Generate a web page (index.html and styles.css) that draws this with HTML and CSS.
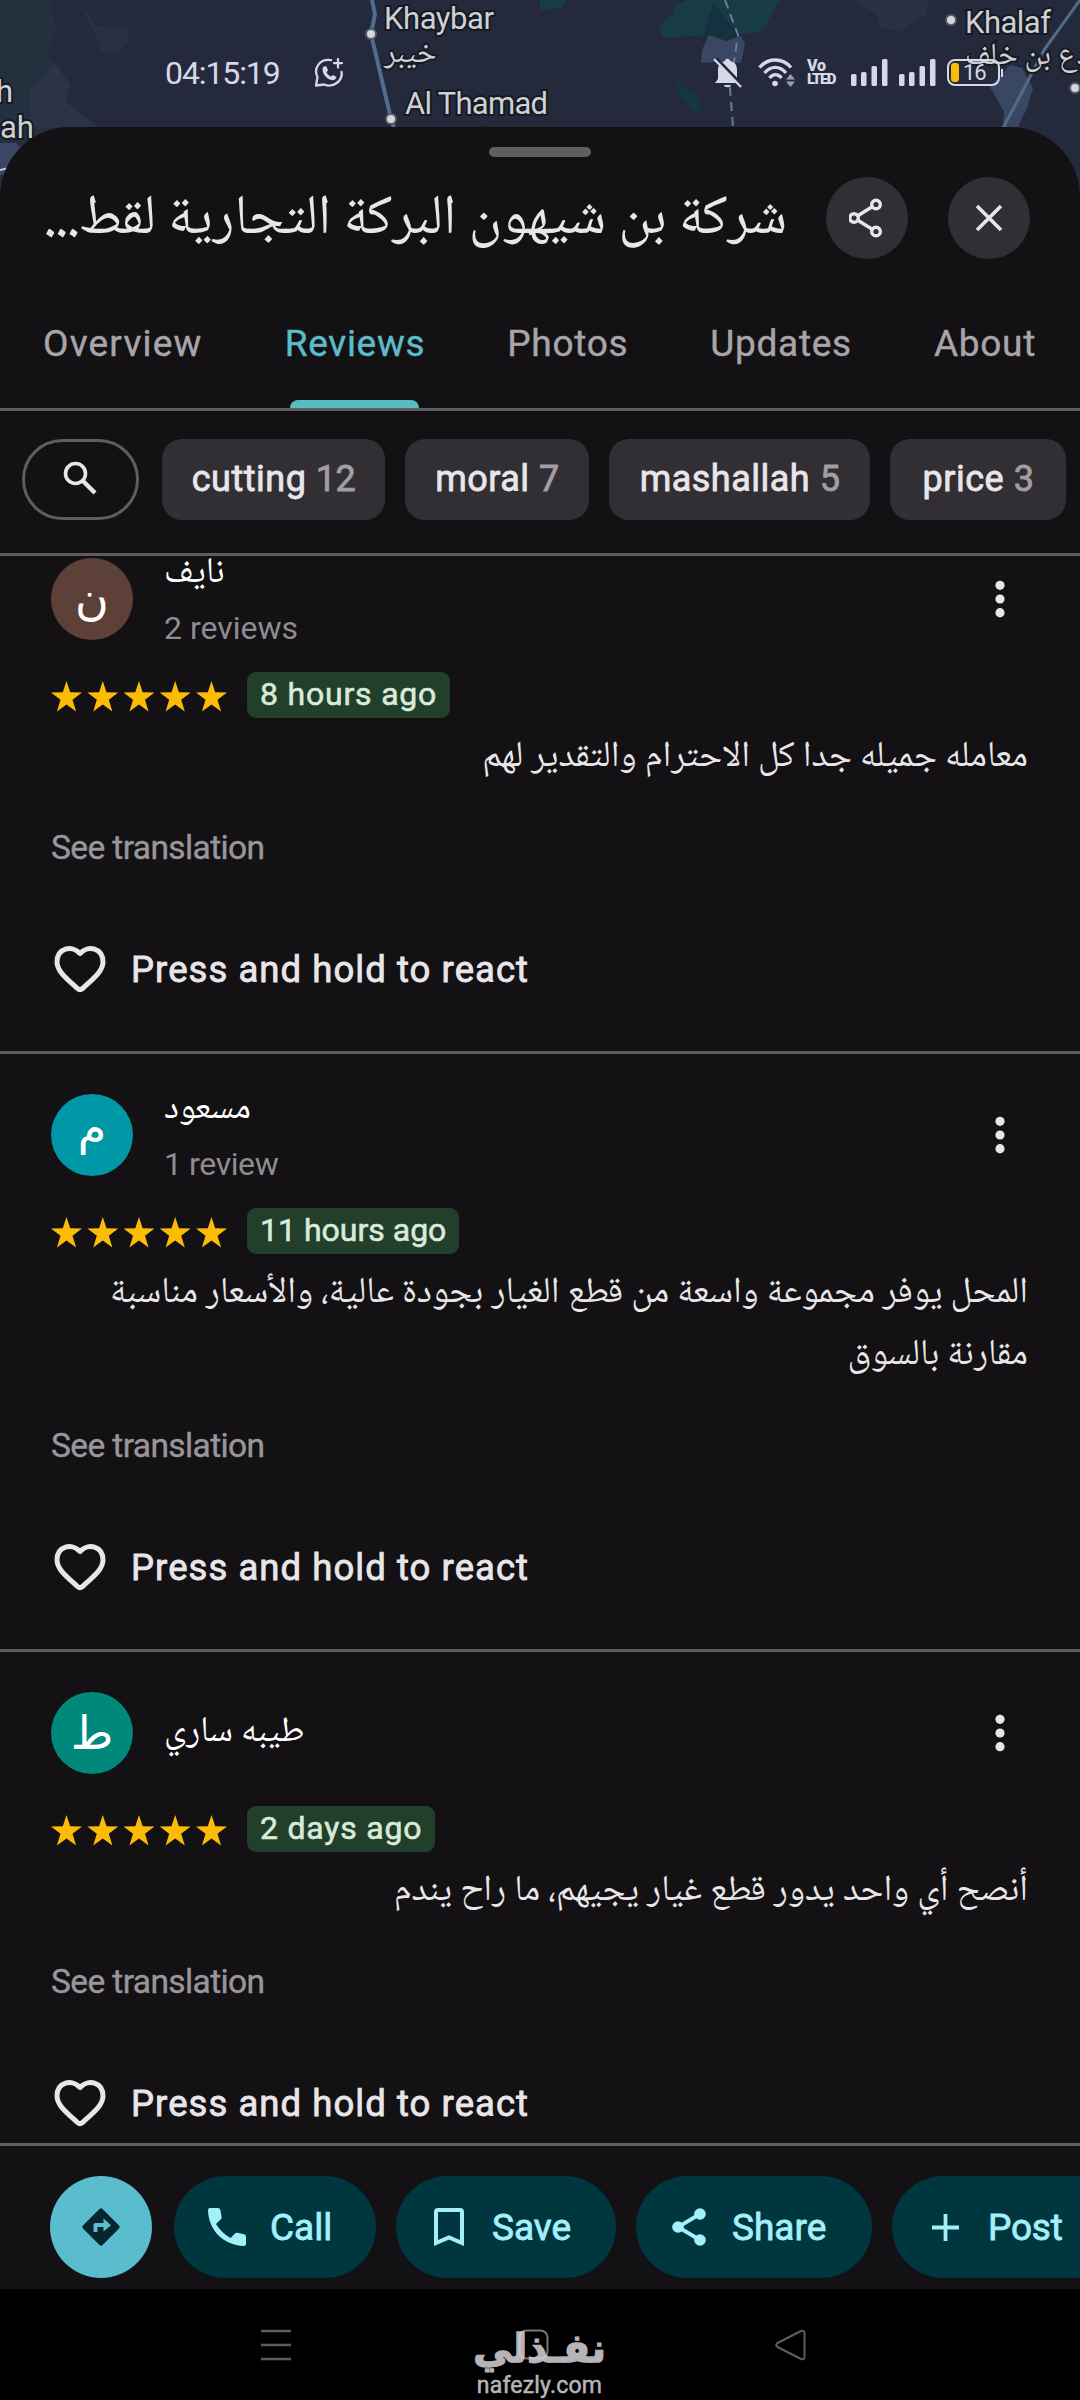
FILE: index.html
```
<!DOCTYPE html>
<html lang="en">
<head>
<meta charset="utf-8">
<title>Reviews</title>
<link rel="stylesheet" href="styles.css">
</head>
<body>
<svg width="0" height="0" class="defs">
  <defs>
    <symbol id="star" viewBox="0 0 31 31"><path fill="#fcbc05" d="M15.500 0 L19.200 11.200 L31 11.400 L21.500 18.700 L25.100 30.500 L15.500 23.500 L5.900 30.500 L9.500 18.700 L0 11.400 L11.800 11.200 Z"/></symbol>
    <symbol id="heart" viewBox="0 0 52 48"><path fill="none" stroke="#e9e6ea" stroke-width="5" stroke-linejoin="round" d="M26 8.500 C18 -.5 3 3 3 17 C3 26 12 33 23.500 43.500 Q26 45.700 28.500 43.500 C40 33 49 26 49 17 C49 3 34 -.5 26 8.500 Z"/></symbol>
    <symbol id="more" viewBox="0 0 10 38"><g fill="#e9e6ea"><circle cx="5" cy="5.300" r="4.600"/><circle cx="5" cy="19" r="4.600"/><circle cx="5" cy="32.700" r="4.600"/></g></symbol>
    <symbol id="stars" viewBox="0 0 176 31">
      <use href="#star" x="0" width="31" height="31"/><use href="#star" x="36.300" width="31" height="31"/><use href="#star" x="72.500" width="31" height="31"/><use href="#star" x="108.700" width="31" height="31"/><use href="#star" x="145" width="31" height="31"/>
    </symbol>
  </defs>
</svg>
<div class="screen">
  <svg class="map" width="1080" height="210" viewBox="0 0 1080 210">
    <rect width="1080" height="210" fill="#242a3c"/>
    <path fill="#27333f" opacity=".7" d="M0 0H50L56 30L48 55L62 80L55 105L95 127V210H0Z"/>
    <path fill="#283144" d="M78 0L96 26L130 28L128 42L118 54L102 52L96 36Z"/>
    <path fill="#2b3346" d="M55 62L70 85L66 102L98 127H30V90Z"/>
    <path fill="#2a3142" d="M855 0H930L925 15L900 32L880 26L876 14Z"/>
    <path fill="#3b4667" d="M0 143H16L30 160L12 175H0Z"/>
    <path stroke="#c4c6c8" stroke-width="2" d="M0 170L14 167"/>
    <path fill="#173c46" d="M540 0H566L562 8L540 10Z M659 30L665 18L674 14V6L687 0H781L770 17L764 30L757 32L736 35L725 38L690 36L664 38Z"/>
    <path fill="#15303e" d="M714 4L739 33L734 38L727 41L703 35L709 15Z"/>
    <path fill="#3a4763" d="M709 35L726 41L741 36L745 44L741 63L717 62L701 63L702 50Z"/>
    <path fill="#143841" d="M676 81L697 95L701 110L694 112L680 96Z"/>
    <path fill="#3a4763" d="M990 87L1010 65L1022 68L1033 88L1027 108L1018 127H1003L1004 112Z"/>
    <path fill="none" stroke="#697e92" stroke-width="2" stroke-dasharray="9 6" d="M725 0L738 35L730 88L733 127"/>
    <path fill="none" stroke="#4f6c91" stroke-width="4" d="M372 0L375 14L371 34L391 119L394 128"/>
    <path fill="none" stroke="#516b88" stroke-width="3" d="M1080 0L1044 50L1019 98L1003 128"/>
    <g fill="#d5d6d8" stroke="#555a63" stroke-width="2"><circle cx="371" cy="34" r="5"/><circle cx="391" cy="119" r="5"/><circle cx="951" cy="20" r="5"/><circle cx="1075" cy="88" r="5"/></g>
    <g class="place">
      <text x="384" y="29" textLength="110">Khaybar</text>
      <text x="384" y="62" class="place-ar">خيبر</text>
      <text x="405" y="114" textLength="143">Al Thamad</text>
      <text x="441" y="150" class="place-ar">الثمد</text>
      <text x="965" y="33" textLength="86">Khalaf</text>
      <text x="965" y="64" class="place-ar">جدع بن خلف</text>
      <text x="-4" y="102">h</text>
      <text x="0" y="138">ah</text>
    </g>
  </svg>

  <header class="status">
    <span class="clock">04:15:19</span>
    <svg class="wa" width="30" height="30" viewBox="0 0 30 30"><path fill="none" stroke="#d6d8e8" stroke-width="2.300" stroke-linecap="round" stroke-linejoin="round" d="M17 2.200 C6 .5 -1 10 3.500 19 L2 27.500 L10 26.500 C20 30.500 29 22 27.500 14 M24 1V9.500 M20 5.200H28"/><path fill="#d6d8e8" d="M9 9L12 8L14 12L12.500 14.500C14 17 15.500 18 17 18.500L19 17L22.500 19C22 21.500 20 22.500 17.500 22C12.500 21 7 15 9 9Z"/></svg>
    <div class="indicators">
      <svg width="30" height="30" viewBox="0 0 30 30"><path fill="#d6d8e8" d="M2 25L5 21V12C5 7 8 4 12 3C12 0 17 0 17 3C22 4 24 7 24 12V21L27 25Z M11 27H18C18 30 11 30 11 27Z"/><path stroke="#242a3c" stroke-width="3" d="M3 0L30 28"/><path stroke="#d6d8e8" stroke-width="2.300" d="M1 1L28 29"/></svg>
      <svg class="wifi" width="40" height="30" viewBox="0 0 40 30"><g fill="none" stroke="#d6d8e8" stroke-width="3.400"><path d="M1.500 9.500C10-.5 24.500-.5 33 9.500"/><path d="M6.500 15C13 7.500 21.500 7.500 28 15"/><path d="M11.500 20C15 15.500 20 15.500 23.500 20"/></g><circle cx="17" cy="25.500" r="2.800" fill="#d6d8e8"/><path fill="#9a9fb0" d="M28 21.500L32.500 16L37 21.500ZM28 23.500H37L32.500 29Z"/></svg>
      <div class="volte"><span>Vo</span><span>LTED</span></div>
      <svg class="signal" width="37" height="27" viewBox="0 0 37 27"><g fill="#d6d8e8"><rect y="15" width="5.500" height="12" rx="1.500"/><rect x="10" y="13" width="5.500" height="14" rx="1.500"/><rect x="20.500" y="7" width="5.500" height="20" rx="1.500"/><rect x="31" width="5.500" height="27" rx="1.500"/></g></svg>
      <svg class="signal" width="37" height="27" viewBox="0 0 37 27"><g fill="#d6d8e8"><rect y="15" width="5.500" height="12" rx="1.500"/><rect x="10" y="13" width="5.500" height="14" rx="1.500"/><rect x="20.500" y="7" width="5.500" height="20" rx="1.500"/><rect x="31" width="5.500" height="27" rx="1.500"/></g></svg>
      <div class="battery"><i></i><span>16</span></div>
    </div>
  </header>

  <main class="sheet">
    <div class="handle"></div>
    <div class="titlebar">
      <h1 dir="rtl">شركة بن شيهون البركة التجارية لقط<span class="dots">...</span></h1>
      <button class="round"><svg width="36" height="40" viewBox="0 0 36 40"><g fill="none" stroke="#e9e6ea" stroke-width="3.400"><circle cx="27" cy="6.500" r="4.300"/><circle cx="5" cy="20" r="4.300"/><circle cx="27" cy="33.500" r="4.300"/><path d="M8.800 17.700L23.200 8.800M8.800 22.300L23.200 31.200"/></g></svg></button>
      <button class="round"><svg width="28" height="28" viewBox="0 0 28 28"><path stroke="#e9e6ea" stroke-width="3.600" d="M2 2L26 26M26 2L2 26"/></svg></button>
    </div>
    <nav class="tabs"><a>Overview</a><a class="active">Reviews</a><a>Photos</a><a>Updates</a><a>About</a></nav>
    <div class="filters">
      <button class="search"><svg width="34" height="34" viewBox="0 0 34 34"><g fill="none" stroke="#e9e6ea" stroke-width="3.600"><circle cx="12.500" cy="12.500" r="10"/><path stroke-width="4.400" d="M19.500 19.500L32 32"/></g></svg></button>
      <button class="chip c1">cutting <b>12</b></button>
      <button class="chip c2">moral <b>7</b></button>
      <button class="chip c3">mashallah <b>5</b></button>
      <button class="chip c4">price <b>3</b></button>
    </div>

    <section class="reviews">
      <article class="review">
        <div class="author"><div class="avatar brown">ن</div><div class="who"><span class="name">نايف</span><span class="count">2 reviews</span></div><svg class="more" width="10" height="38"><use href="#more"/></svg></div>
        <div class="rating"><svg width="176" height="31"><use href="#stars"/></svg><span class="when">8 hours ago</span></div>
        <p class="text" dir="rtl">معامله جميله جدا كل الاحترام والتقدير لهم</p>
        <a class="translate">See translation</a>
        <div class="react"><svg width="52" height="48"><use href="#heart"/></svg><span>Press and hold to react</span></div>
      </article>
      <article class="review">
        <div class="author"><div class="avatar cyan"><span class="raised">م</span></div><div class="who"><span class="name">مسعود</span><span class="count tight">1 review</span></div><svg class="more" width="10" height="38"><use href="#more"/></svg></div>
        <div class="rating"><svg width="176" height="31"><use href="#stars"/></svg><span class="when tight">11 hours ago</span></div>
        <p class="text" dir="rtl">المحل يوفر مجموعة واسعة من قطع الغيار بجودة عالية، والأسعار مناسبة<br>مقارنة بالسوق</p>
        <a class="translate">See translation</a>
        <div class="react"><svg width="52" height="48"><use href="#heart"/></svg><span>Press and hold to react</span></div>
      </article>
      <article class="review">
        <div class="author"><div class="avatar teal">ط</div><div class="who"><span class="name only">طيبه ساري</span></div><svg class="more" width="10" height="38"><use href="#more"/></svg></div>
        <div class="rating"><svg width="176" height="31"><use href="#stars"/></svg><span class="when">2 days ago</span></div>
        <p class="text" dir="rtl">أنصح أي واحد يدور قطع غيار يجيهم، ما راح يندم</p>
        <a class="translate">See translation</a>
        <div class="react"><svg width="52" height="48"><use href="#heart"/></svg><span>Press and hold to react</span></div>
      </article>
    </section>

    <div class="actions">
      <button class="go"><svg width="38" height="38" viewBox="0 0 38 38"><path fill="#06262f" d="M17.200 1.200Q19-.6 20.800 1.200L36.800 17.200Q38.600 19 36.800 20.800L20.800 36.800Q19 38.600 17.200 36.800L1.200 20.800Q-.6 19 1.200 17.200Z"/><path fill="#5abdce" d="M11.500 24V17Q11.500 15 13.500 15H21.500V10.500L29 17.200L21.500 23.500V19H15.500V24Z"/></svg></button>
      <button class="pill call"><svg width="38" height="38" viewBox="0 0 38 38"><path fill="#a3f0fb" d="M2 0H10Q12 0 12.400 2L13.600 9Q13.800 10.500 12.700 11.500L8 16Q13.500 25 22.500 30L27 25.500Q28 24.500 29.500 24.800L36 26.200Q38 26.600 38 28.500V36Q38 38 36 38C15 37 .5 22 0 2Q0 0 2 0Z"/></svg><span>Call</span></button>
      <button class="pill save"><svg width="30" height="38" viewBox="0 0 30 38"><path fill="none" stroke="#a3f0fb" stroke-width="4" d="M2 35V4Q2 2 4 2H26Q28 2 28 4V35L15 29.500Z"/></svg><span>Save</span></button>
      <button class="pill share"><svg width="34" height="38" viewBox="0 0 34 38"><g fill="#a3f0fb"><circle cx="28" cy="6" r="5.800"/><circle cx="6" cy="19" r="5.800"/><circle cx="28" cy="32" r="5.800"/></g><path fill="none" stroke="#a3f0fb" stroke-width="3.800" d="M28 6L6 19L28 32"/></svg><span>Share</span></button>
      <button class="pill post"><svg width="27" height="27" viewBox="0 0 27 27"><path stroke="#a3f0fb" stroke-width="3.800" d="M13.500 0V27M0 13.500H27"/></svg><span>Post</span></button>
    </div>
  </main>

  <footer class="navbar">
    <svg width="30" height="32" viewBox="0 0 30 32"><path stroke="#5f5d61" stroke-width="2.600" d="M0 2H30M0 16H30M0 30H30"/></svg>
    <svg width="31" height="31" viewBox="0 0 31 31"><rect x="1.500" y="1.500" width="28" height="28" rx="7" fill="none" stroke="#77757a" stroke-width="2"/></svg>
    <svg width="31" height="32" viewBox="0 0 31 32"><path fill="none" stroke="#5f5d61" stroke-width="2" stroke-linejoin="round" d="M2.500 14Q0 16 2.500 18L26 30Q29.500 31 29.500 27.500V4.500Q29.500 1 26 2Z"/></svg>
    <div class="watermark"><span class="wm-ar">نفـذلي</span><span class="wm-en">nafezly.com</span></div>
  </footer>
</div>
</body>
</html>
```
FILE: styles.css
```
* { box-sizing: border-box; }
body { margin: 0; background: #000; font-family: Roboto, sans-serif; color: #e9e6ea; }
button { border: 0; padding: 0; font: inherit; color: inherit; background: none; display: flex; align-items: center; justify-content: center; flex: none; }
h1, p { margin: 0; font-weight: 400; }
svg { flex: none; display: block; }
.defs { position: absolute; }
.screen { position: relative; width: 1080px; height: 2400px; overflow: hidden; background: #000; display: flex; flex-direction: column; }

.map { position: absolute; left: 0; top: 0; }
.place { font-size: 31px; fill: #cfd0d2; stroke: #151a24; stroke-width: 4px; paint-order: stroke; }
.place-ar { font-family: "Noto Naskh Arabic", "Noto Sans Arabic", "DejaVu Sans", sans-serif; font-size: 31px; }

.status { position: relative; height: 127px; padding: 18px 80px 0 165px; display: flex; align-items: center; color: #d6d8e8; }
.clock { font-size: 32px; letter-spacing: -1.100px; width: 149px; white-space: nowrap; }
.indicators { margin-left: auto; display: flex; align-items: center; }
.wifi { margin-left: 15px; }
.volte { width: 31px; margin: 0 13px 0 9px; display: flex; flex-direction: column; font: 900 16px/13px Roboto, sans-serif; letter-spacing: -.2px; white-space: nowrap; }
.volte span + span { font-size: 15px; line-height: 14px; letter-spacing: -1.600px; }
.signal { margin-right: 11px; }
.battery { position: relative; width: 53px; height: 27px; border: 2px solid #d6d8e8; border-radius: 8px; padding-left: 2px; display: flex; align-items: center; gap: 4px; font-size: 22px; letter-spacing: -1px; }
.battery i { width: 8px; height: 19px; border-radius: 3px; background: #fcbc05; }
.battery::after { content: ""; position: absolute; right: -5px; top: 8px; width: 2px; height: 8px; background: #d6d8e8; }

.sheet { position: relative; height: 2162px; background: #131114; border-radius: 70px 70px 0 0; display: flex; flex-direction: column; }
.handle { width: 102px; height: 10px; border-radius: 5px; background: #5f5e61; margin: 20px auto 0; }
.titlebar { height: 121px; padding: 0 50px 0 42px; display: flex; align-items: center; }
h1 { width: 745px; margin-right: 39px; padding-top: 6px; font: 400 56px/90px "Noto Naskh Arabic", "Noto Sans Arabic", "DejaVu Sans", sans-serif; white-space: nowrap; }
.dots { letter-spacing: 3px; -webkit-text-stroke: 1px currentColor; }
.round { width: 82px; height: 82px; border-radius: 50%; background: #322f34; }
.round + .round { margin-left: 40px; }

.tabs { height: 133px; padding: 4px 44px 0 43px; display: flex; justify-content: space-between; border-bottom: 3px solid #5e5d60; font-size: 37px; color: #a8a5aa; -webkit-text-stroke: .4px currentColor; }
.tabs a { position: relative; line-height: 124px; letter-spacing: 1.200px; }
.tabs a:nth-child(n+2) { letter-spacing: .7px; }
.tabs .active { color: #5abdc9; }
.tabs .active::after { content: ""; position: absolute; left: 5px; right: 6px; bottom: 0; height: 8px; border-radius: 8px 8px 0 0; background: #57bcc4; }

.filters { height: 145px; padding: 28px 14px 0 22px; display: flex; gap: 20px; border-bottom: 3px solid #5e5d60; }
.search { width: 117px; height: 81px; border: 3px solid #5e5d60; border-radius: 41px; margin-right: 3px; padding: 0 2px 3px 0; }
.chip { height: 81px; border-radius: 20px; background: #322f34; font-size: 36px; letter-spacing: .5px; white-space: pre; padding-bottom: 1px; -webkit-text-stroke: .8px currentColor; }
.chip b { font-weight: 400; color: #a19ea3; letter-spacing: -.5px; }
.c1 { width: 223px; } .c2 { width: 184px; } .c3 { width: 261px; } .c4 { width: 176px; }

.reviews { height: 1587px; overflow: hidden; display: flex; flex-direction: column; }
.review { flex: none; padding: 40px 52px 0 51px; border-bottom: 3px solid #5e5d60; }
.review:first-child { margin-top: -38px; }
.author { height: 82px; display: flex; align-items: center; }
.avatar { width: 82px; height: 82px; border-radius: 50%; display: flex; align-items: center; justify-content: center; color: #fff; font: 46px/78px "DejaVu Sans", sans-serif; }
.raised { padding-bottom: 14px; }
.brown { background: #5d4037; } .cyan { background: #0097a7; } .teal { background: #00897b; }
.who { margin-left: 31px; display: flex; flex-direction: column; }
.name { color: #fff; font: 36px/54px "Noto Naskh Arabic", "Noto Sans Arabic", "DejaVu Sans", sans-serif; height: 55px; padding-top: 4px; }
.only { padding-top: 1px; }
.count { color: #8f8c91; font-size: 32px; line-height: 58px; height: 55px; }
.count.tight { letter-spacing: -.4px; }
.more { margin: 0 23px 0 auto; }
.rating { margin-top: 32px; height: 46px; display: flex; align-items: center; gap: 20px; }
.rating svg { margin-top: 2px; }
.when { height: 46px; line-height: 45px; padding: 0 13px; border-radius: 9px; background: #213f2b; color: #d9ead9; font-size: 32px; letter-spacing: .8px; -webkit-text-stroke: .6px currentColor; }
.when.tight { letter-spacing: 0; }
.text { margin-top: 9px; white-space: nowrap; font: 36.500px/62px "Noto Naskh Arabic", "Noto Sans Arabic", "DejaVu Sans", sans-serif; }
.translate { display: block; margin-top: 39px; line-height: 40px; font-size: 33.500px; letter-spacing: -.6px; color: #99969b; -webkit-text-stroke: .4px currentColor; }
.react { margin: 74px 0 55px 3px; height: 54px; display: flex; align-items: center; gap: 25px; font-size: 36.500px; letter-spacing: 1.050px; -webkit-text-stroke: .8px currentColor; }

.actions { height: 146px; border-top: 3px solid #5e5d60; padding: 30px 0 0 50px; display: flex; overflow: hidden; color: #a3f0fb; font-size: 37px; letter-spacing: .5px; -webkit-text-stroke: .8px currentColor; }
.go { width: 102px; height: 102px; border-radius: 50%; background: #5abdce; }
.pill { height: 102px; border-radius: 51px; background: #00373e; justify-content: flex-start; }
.call { width: 202px; margin-left: 22px; padding-left: 34px; gap: 24px; }
.save { width: 220px; margin-left: 20px; padding-left: 38px; gap: 28px; }
.share { width: 236px; margin-left: 20px; padding-left: 36px; gap: 26px; }
.post { width: 236px; margin-left: 20px; padding-left: 40px; gap: 29px; letter-spacing: -.2px; }

.navbar { position: relative; height: 111px; padding: 0 274px 0 261px; display: flex; justify-content: space-between; align-items: flex-start; }
.navbar > svg { margin-top: 40px; }
.watermark { position: absolute; left: 474px; top: 34px; width: 131px; display: flex; flex-direction: column; align-items: center; color: #d8d4da; opacity: .85; white-space: nowrap; }
.wm-ar { font: 700 39px/52px "DejaVu Sans", sans-serif; -webkit-text-stroke: 1.500px #d8d4da; }
.wm-en { font: 400 23px/24px Roboto, sans-serif; letter-spacing: .2px; margin-top: -1px; -webkit-text-stroke: .5px currentColor; }
```
